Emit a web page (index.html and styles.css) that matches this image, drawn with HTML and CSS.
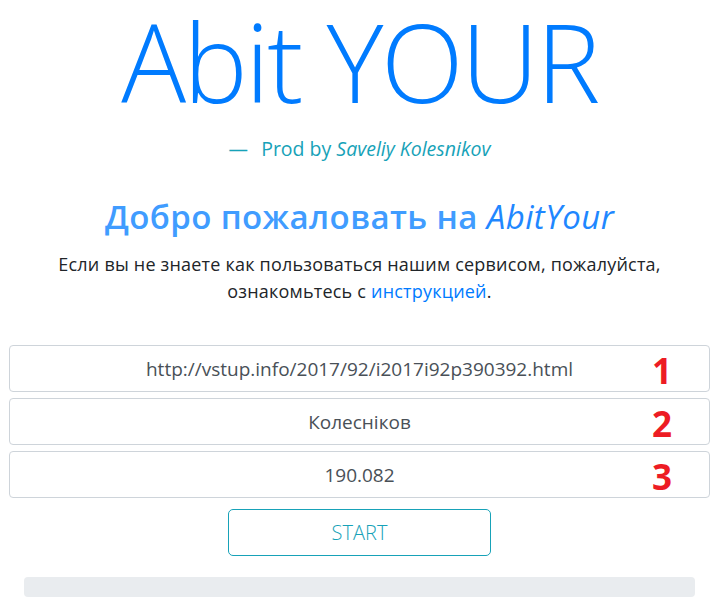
FILE: index.html
```html
<!DOCTYPE html>
<html lang="ru">
<head>
<meta charset="utf-8">
<title>AbitYour</title>
<link rel="stylesheet" href="styles.css">
</head>
<body>
<div class="page">
  <h1 class="title">Abit YOUR</h1>
  <p class="byline"><span class="dash">—</span> Prod by <cite>Saveliy Kolesnikov</cite></p>
  <h2 class="welcome">Добро пожаловать на <em>AbitYour</em></h2>
  <p class="intro">Если вы не знаете как пользоваться нашим сервисом, пожалуйста,<br>ознакомьтесь с <a href="#">инструкцией</a>.</p>
  <div class="fields">
    <div class="field"><input class="control" type="text" value="http://vstup.info/2017/92/i2017i92p390392.html"><span class="mark">1</span></div>
    <div class="field"><input class="control" type="text" value="Колесніков"><span class="mark">2</span></div>
    <div class="field"><input class="control" type="text" value="190.082"><span class="mark">3</span></div>
  </div>
  <button class="start" type="button">START</button>
  <div class="progress"></div>
</div>
</body>
</html>
```
FILE: styles.css
```css
html, body {
  margin: 0;
  padding: 0;
  background: #fff;
}
body {
  font-family: "Open Sans", "Noto Sans", sans-serif;
  color: #212529;
}
.page {
  width: 701px;
  margin-left: 9px;
  padding-top: 1px;
  text-align: center;
}
.title {
  margin: -4px 0 0;
  font-size: 108px;
  line-height: 130px;
  font-weight: 300;
  letter-spacing: -2.5px;
  color: #007bff;
}
.byline {
  margin: 8px 0 0;
  font-size: 19.5px;
  line-height: 28px;
  color: #17a2b8;
}
.byline .dash {
  margin-right: 8px;
}
.byline cite {
  font-style: italic;
}
.welcome {
  margin: 35px 0 0;
  font-size: 33px;
  line-height: 38px;
  font-weight: 600;
  letter-spacing: 0.4px;
  color: #409cff;
}
.welcome em {
  font-weight: 400;
  color: #1f87ff;
}
.intro {
  margin: 15px 0 0;
  font-size: 18px;
  line-height: 27px;
  letter-spacing: 0.2px;
}
.intro a {
  color: #007bff;
  text-decoration: none;
}
.fields {
  margin-top: 40px;
  display: flex;
  flex-direction: column;
  gap: 6px;
}
.field {
  position: relative;
}
.control {
  display: block;
  box-sizing: border-box;
  width: 100%;
  height: 47px;
  margin: 0;
  padding: 0 16px;
  border: 1px solid #ced4da;
  border-radius: 4px;
  font-family: inherit;
  font-size: 19px;
  color: #495057;
  text-align: center;
  background: #fff;
}
.mark {
  position: absolute;
  right: 38px;
  top: 2px;
  font-size: 35px;
  line-height: 47px;
  font-weight: 700;
  color: #ed1c24;
}
.start {
  display: block;
  box-sizing: border-box;
  width: 263px;
  height: 47px;
  margin: 11px auto 0;
  border: 1px solid #17a2b8;
  border-radius: 5px;
  background: #fff;
  color: #17a2b8;
  font-family: inherit;
  font-size: 20px;
  font-weight: 300;
}
.progress {
  height: 20px;
  margin: 21px 15px 0;
  background: #e9ecef;
  border-radius: 4px;
}
```
